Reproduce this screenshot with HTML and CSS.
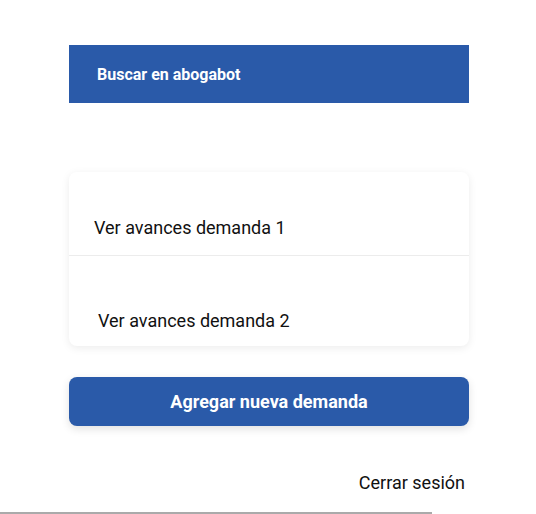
FILE: index.html
```html
<!DOCTYPE html>
<html lang="es">
<head>
<meta charset="utf-8">
<title>abogabot</title>
<link rel="stylesheet" href="styles.css">
</head>
<body>
<div class="page">
  <div class="search-bar">Buscar en abogabot</div>
  <div class="card">
    <div class="row row-1">Ver avances demanda 1</div>
    <div class="row row-2">Ver avances demanda 2</div>
  </div>
  <button class="add-btn">Agregar nueva demanda</button>
  <div class="logout">Cerrar sesión</div>
</div>
<div class="bottom-line"></div>
</body>
</html>
```
FILE: styles.css
```css
html, body {
  margin: 0;
  padding: 0;
  background: #fff;
  font-family: Roboto, "Liberation Sans", sans-serif;
  color: #111;
}
.page {
  width: 400px;
  margin-left: 69px;
  padding-top: 45px;
  display: flex;
  flex-direction: column;
}
.search-bar {
  height: 58px;
  background: #2a5aa9;
  color: #fff;
  font-weight: 700;
  font-size: 16px;
  display: flex;
  align-items: center;
  padding-left: 28px;
}
.card {
  margin-top: 69px;
  background: #fff;
  border-radius: 8px;
  box-shadow: 0 2px 8px rgba(0,0,0,0.08);
  display: flex;
  flex-direction: column;
}
.row {
  font-size: 18px;
  line-height: 21px;
}
.row-1 {
  padding: 45px 25px 17px;
  border-bottom: 1px solid #ececec;
}
.row-2 {
  padding: 54px 29px 15px;
}
.add-btn {
  margin-top: 31px;
  height: 49px;
  border: none;
  border-radius: 8px;
  background: #2a5aa9;
  color: #fff;
  font-family: Roboto, "Liberation Sans", sans-serif;
  font-weight: 700;
  font-size: 18px;
  box-shadow: 0 3px 8px rgba(0,0,0,0.12);
  padding: 0;
}
.logout {
  margin-top: 46px;
  font-size: 18px;
  line-height: 21px;
  text-align: right;
  padding-right: 4px;
}
.bottom-line {
  margin-top: 19px;
  width: 432px;
  height: 2px;
  background: #aaa;
}
```
